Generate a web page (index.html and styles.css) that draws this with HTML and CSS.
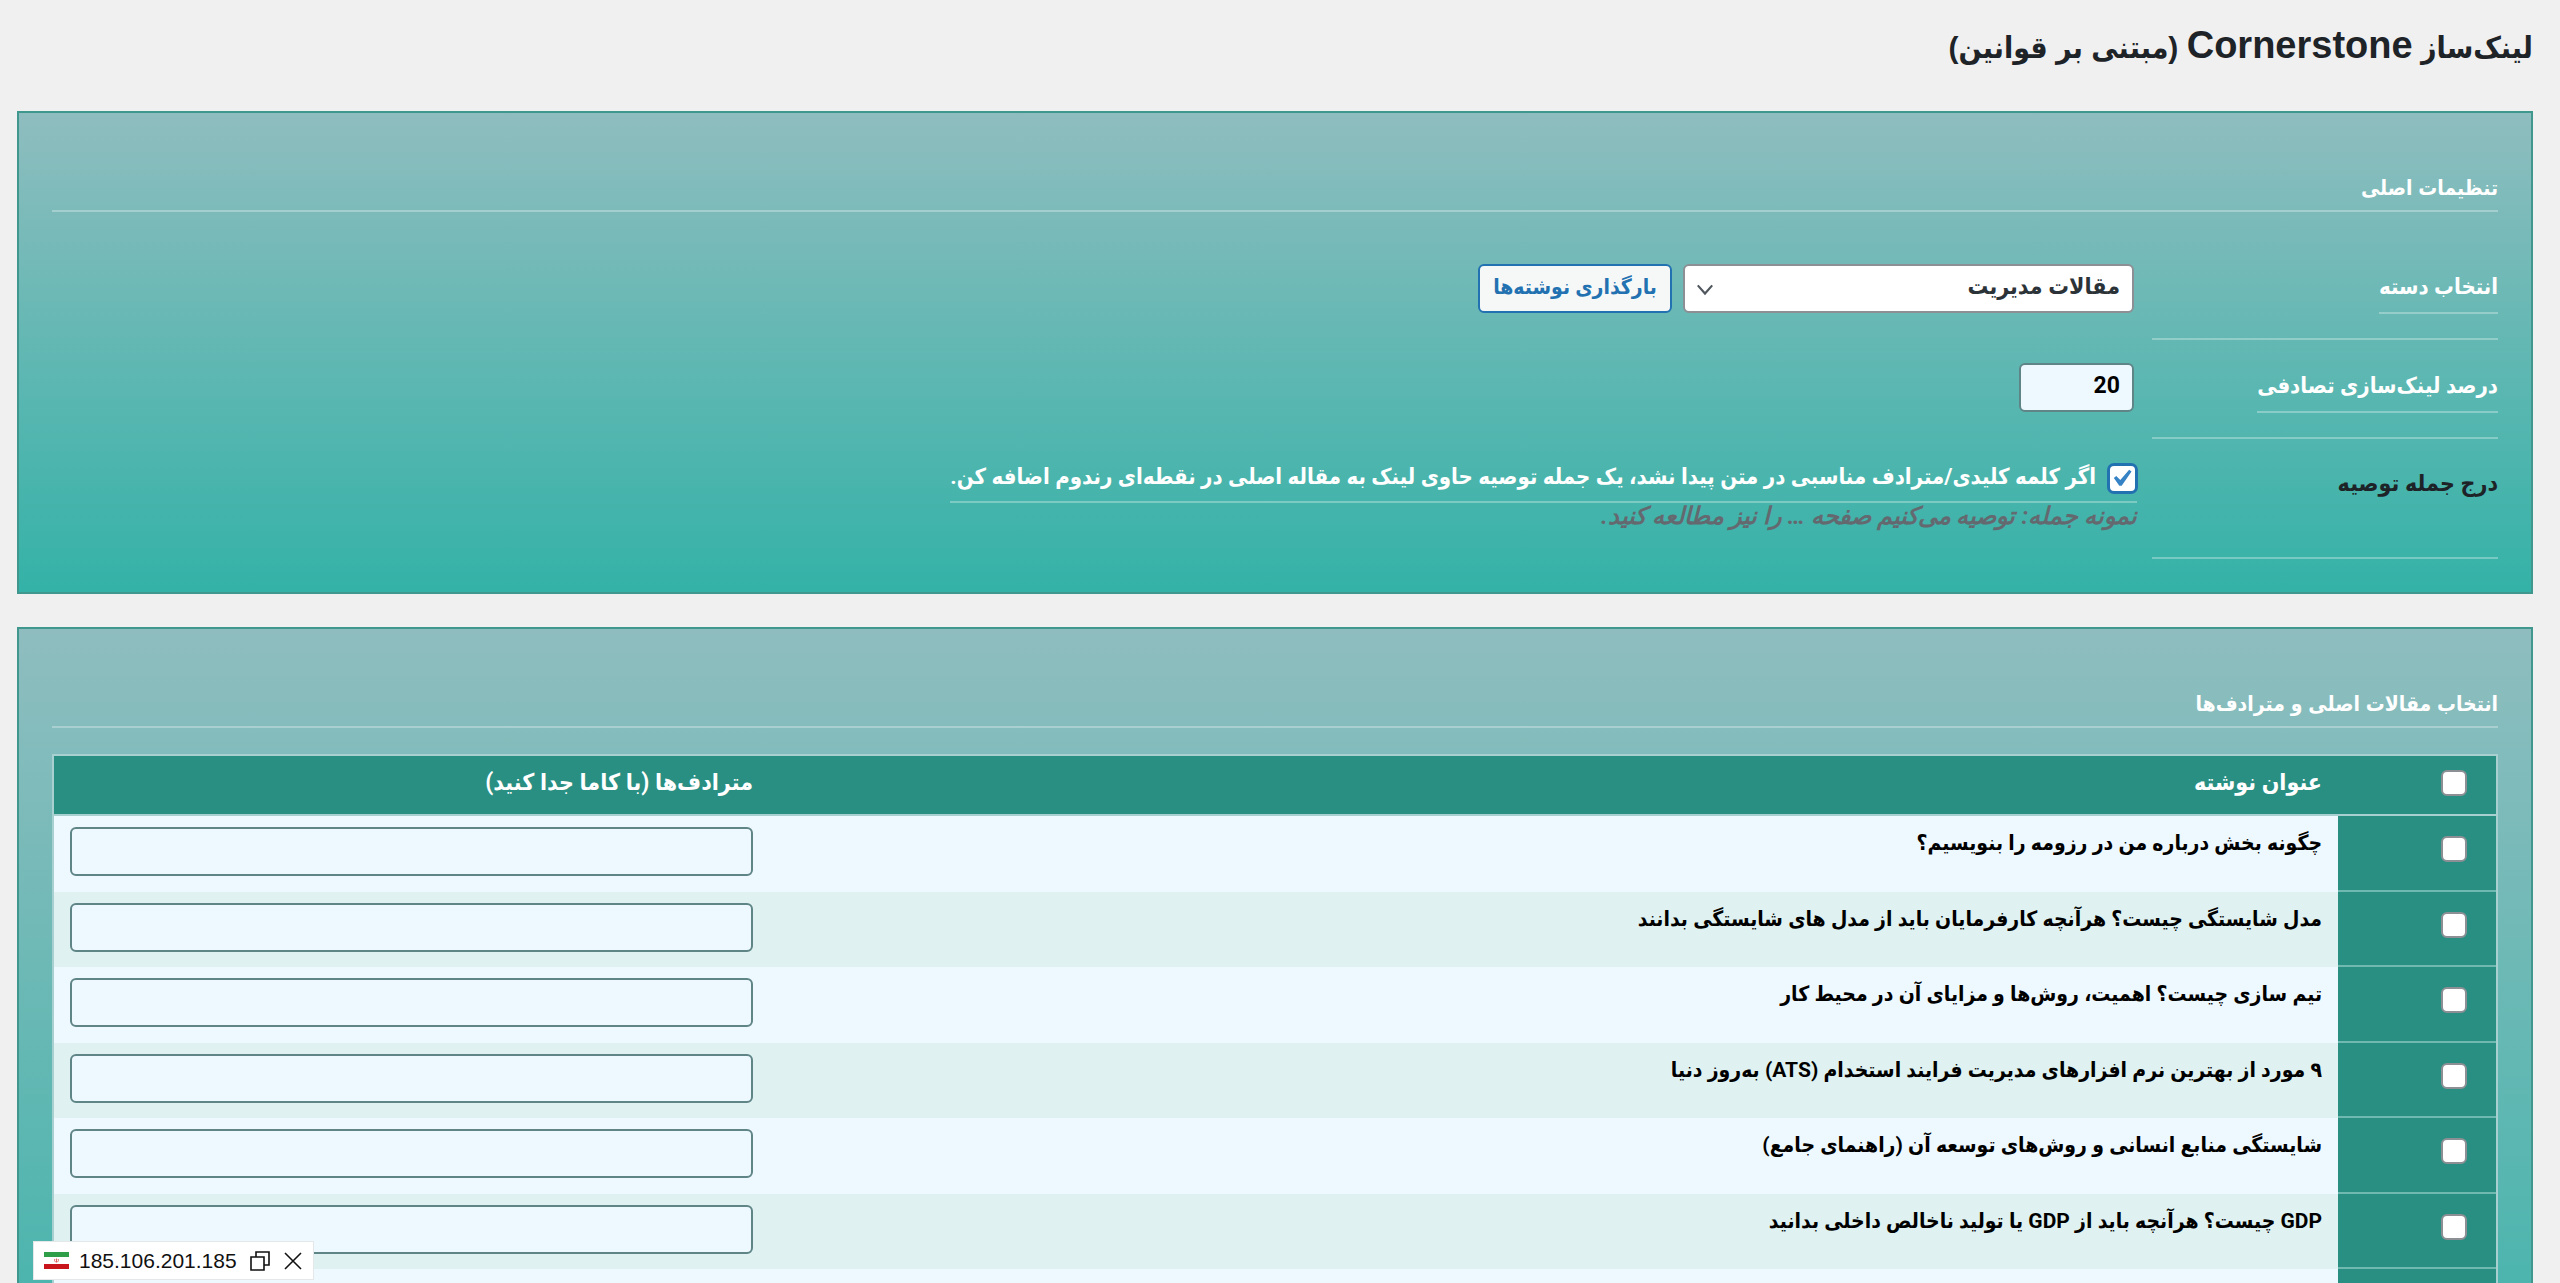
FILE: index.html
```html
<!DOCTYPE html>
<html lang="fa" dir="rtl">
<head>
<meta charset="utf-8">
<meta name="viewport" content="width=device-width, initial-scale=1">
<title>لینک‌ساز Cornerstone</title>
<link rel="stylesheet" href="styles.css">
</head>
<body>

<div class="wrap">
  <h1>لینک‌ساز <span class="latin">Cornerstone</span> (مبتنی بر قوانین)</h1>

  <form class="card">
    <h2>تنظیمات اصلی</h2>
    <div class="form-row">
      <div class="form-head"><label for="category">انتخاب دسته</label></div>
      <div class="form-field">
        <span class="select-box">
          <select id="category">
            <option>مقالات مدیریت</option>
          </select>
          <svg class="arrow" viewBox="0 0 20 20"><path d="M2 6l8 9 8-9" fill="none" stroke="#50575e" stroke-width="2.4"/></svg>
        </span>
        <button type="button" class="button">بارگذاری نوشته‌ها</button>
      </div>
    </div>
    <div class="form-row">
      <div class="form-head"><label for="percent">درصد لینک‌سازی تصادفی</label></div>
      <div class="form-field"><input type="text" class="small-text" id="percent" value="20"></div>
    </div>
    <div class="form-row last">
      <div class="form-head">درج جمله توصیه</div>
      <div class="form-field suggest">
        <label for="suggest"><input type="checkbox" class="check" id="suggest" checked>اگر کلمه کلیدی/مترادف مناسبی در متن پیدا نشد، یک جمله توصیه حاوی لینک به مقاله اصلی در نقطه‌ای رندوم اضافه کن.</label>
        <p class="description">نمونه جمله: توصیه می‌کنیم صفحه … را نیز مطالعه کنید.</p>
      </div>
    </div>
  </form>

  <div class="card posts">
    <h2>انتخاب مقالات اصلی و مترادف‌ها</h2>
    <table>
      <thead>
        <tr>
          <th class="col-check"><input type="checkbox" class="check" aria-label="انتخاب همه"></th>
          <th>عنوان نوشته</th>
          <th class="col-syn">مترادف‌ها (با کاما جدا کنید)</th>
        </tr>
      </thead>
      <tbody>
        <tr>
          <th class="col-check"><input type="checkbox" class="check" id="p1"></th>
          <td><label for="p1">چگونه بخش درباره من در رزومه را بنویسیم؟</label></td>
          <td><input type="text" class="synonyms" aria-label="مترادف‌ها"></td>
        </tr>
        <tr>
          <th class="col-check"><input type="checkbox" class="check" id="p2"></th>
          <td><label for="p2">مدل شایستگی چیست؟ هرآنچه کارفرمایان باید از مدل های شایستگی بدانند</label></td>
          <td><input type="text" class="synonyms" aria-label="مترادف‌ها"></td>
        </tr>
        <tr>
          <th class="col-check"><input type="checkbox" class="check" id="p3"></th>
          <td><label for="p3">تیم سازی چیست؟ اهمیت، روش‌ها و مزایای آن در محیط کار</label></td>
          <td><input type="text" class="synonyms" aria-label="مترادف‌ها"></td>
        </tr>
        <tr>
          <th class="col-check"><input type="checkbox" class="check" id="p4"></th>
          <td><label for="p4">۹ مورد از بهترین نرم افزارهای مدیریت فرایند استخدام (ATS) به‌روز دنیا</label></td>
          <td><input type="text" class="synonyms" aria-label="مترادف‌ها"></td>
        </tr>
        <tr>
          <th class="col-check"><input type="checkbox" class="check" id="p5"></th>
          <td><label for="p5">شایستگی منابع انسانی و روش‌های توسعه آن (راهنمای جامع)</label></td>
          <td><input type="text" class="synonyms" aria-label="مترادف‌ها"></td>
        </tr>
        <tr>
          <th class="col-check"><input type="checkbox" class="check" id="p6"></th>
          <td><label for="p6">GDP چیست؟ هرآنچه باید از GDP یا تولید ناخالص داخلی بدانید</label></td>
          <td><input type="text" class="synonyms" aria-label="مترادف‌ها"></td>
        </tr>
        <tr>
          <th class="col-check"></th>
          <td></td>
          <td></td>
        </tr>
      </tbody>
    </table>
  </div>
</div>

<div class="ip-badge" dir="ltr">
  <svg class="flag" viewBox="0 0 25 17">
    <rect width="25" height="17" fill="#fff"/>
    <rect width="25" height="5" fill="#2f9e48"/>
    <rect y="12" width="25" height="5" fill="#c8141b"/>
    <path d="M12.5 6.5v4M10.8 7q-.8 1.8.8 3.2M14.2 7q.8 1.8-.8 3.2" fill="none" stroke="#d9534f" stroke-width=".9"/>
  </svg>
  <span class="ip">185.106.201.185</span>
  <button type="button" aria-label="کپی"><svg viewBox="0 0 20 20"><path d="M6 6V1h13v13h-5M1 6h13v13H1z" fill="none" stroke="#111" stroke-width="1.6"/></svg></button>
  <button type="button" aria-label="بستن"><svg viewBox="0 0 20 20"><path d="M2 2l16 16M18 2L2 18" fill="none" stroke="#111" stroke-width="1.6"/></svg></button>
</div>

</body>
</html>
```
FILE: styles.css
```css
* {box-sizing: border-box}

body {
  margin: 0;
  height: 100vh;
  overflow: hidden;
  background: #f0f0f1;
  color: #1d2327;
  font-family: Roboto, "DejaVu Sans Condensed", "DejaVu Sans", sans-serif;
  font-size: 23px;
  font-weight: bold;
  line-height: 32px;
}

.wrap {
  padding: 15px 27px 0 17px;
}

h1 {
  margin: 0 0 33px;
  font-family: "Liberation Sans", "DejaVu Sans Condensed", sans-serif;
  font-size: 30px;
  line-height: 60px;
}

h1 .latin {
  font-size: 38px;
}

/* Cards */
.card {
  margin-bottom: 33px;
  padding: 56px 33px 33px;
  border: 2px solid #3f978e;
  background: linear-gradient(#8fbdbf, #34b2a7);
}

.card h2 {
  margin: 0;
  height: 43px;
  border-bottom: 2px solid rgba(255, 255, 255, 0.3);
  color: #fff;
  font-family: "Liberation Sans", "DejaVu Sans Condensed", sans-serif;
  font-size: 21px;
  line-height: 38px;
}

/* Settings form */
.form-row {
  display: flex;
  align-items: stretch;
}

.form-head {
  width: 346px;
  height: 99px;
  padding-top: 24px;
  border-bottom: 2px solid rgba(255, 255, 255, 0.3);
}

.form-row:nth-of-type(1) .form-head {
  height: 128px;
  padding-top: 53px;
}

.form-row.last .form-head {
  height: 120px;
  padding-top: 29px;
}

.form-head label,
.suggest label {
  display: inline-block;
  height: 49px;
  border-bottom: 2px solid rgba(255, 255, 255, 0.3);
  color: #fff;
  font-size: 22px;
  line-height: 44px;
}

.form-field {
  display: flex;
  align-items: flex-end;
  gap: 11px;
  padding: 0 18px 27px 0;
}

.form-field.suggest {
  display: block;
  padding: 22px 15px 0 0;
}

.suggest label {
  height: 42px;
  line-height: 32px;
}

.suggest .check {
  width: 29px;
  height: 29px;
  margin: 0 0 0 12px;
  border: 2px solid #2271b1;
  box-shadow: 0 0 0 1px #2271b1;
}

.description {
  margin: 0;
  color: #646970;
  font-size: 24px;
  font-style: italic;
  line-height: 26px;
}

input[type=text],
select,
.button {
  height: 49px;
  border: 2px solid #5f8587;
  border-radius: 6px;
  font-family: inherit;
  font-size: 23px;
  font-weight: bold;
}

input[type=text] {
  background: #eef8ff;
  color: #000;
}

.small-text {
  width: 115px;
  padding: 0 12px 4px;
}

.select-box {
  position: relative;
}

select {
  display: block;
  appearance: none;
  width: 451px;
  padding: 0 12px 4px;
  border-color: #8c8f94;
  background: #fff;
  color: #2c3338;
}

.arrow {
  position: absolute;
  left: 13px;
  top: 16px;
  width: 18px;
  height: 18px;
}

.button {
  width: 194px;
  padding: 0 0 4px;
  border-color: #2271b1;
  background: #f6f7f7;
  color: #2271b1;
  font-size: 21px;
}

/* Check boxes */
.check {
  appearance: none;
  width: 26px;
  height: 26px;
  margin: 0;
  border: 2px solid #8c8f94;
  border-radius: 6px;
  background: #fff;
  vertical-align: middle;
}

.check:checked::before {
  content: "";
  display: block;
  width: 34px;
  height: 34px;
  margin: -4px -3px 0 0;
  background: #3582c4;
  clip-path: polygon(74% 24%, 81% 29%, 52% 71%, 45% 71%, 29% 48%, 36% 42%, 48% 54%);
}

/* Posts table */
.posts {
  padding-bottom: 180px;
}

table {
  width: 100%;
  margin-top: 26px;
  border: 2px solid #a9d0d0;
  border-spacing: 0;
  table-layout: fixed;
}

th, td {
  padding: 11px 16px;
  text-align: right;
  vertical-align: top;
}

thead th {
  height: 60px;
  border-bottom: 2px solid #a9d0d0;
  background: #298f83;
  color: #fff;
}

tbody tr {
  height: 76px;
  background: #eef8ff;
  color: #000;
  font-size: 21px;
}

tbody tr:nth-child(even) {
  height: 75px;
  background: #dff2f1;
}

.col-check {
  width: 158px;
  padding-top: 14px;
  padding-right: 29px;
}

.col-check .check {
  display: block;
}

.col-syn {
  width: 715px;
}

tbody .col-check {
  padding-top: 20px;
  border-bottom: 2px solid #6fb9b1;
  background: #298f83;
}

.synonyms {
  display: block;
  width: 100%;
  padding: 0 12px;
}

/* IP badge */
.ip-badge {
  position: fixed;
  left: 33px;
  bottom: 3px;
  display: flex;
  align-items: center;
  height: 39px;
  padding: 0 10px;
  border: 1px solid #e4e8e8;
  background: #fff;
  color: #111;
  font-family: "Liberation Sans", sans-serif;
  font-size: 21px;
  font-weight: normal;
}

.ip-badge .flag {
  width: 25px;
  height: 17px;
  margin-right: 10px;
}

.ip-badge button {
  width: 20px;
  height: 20px;
  margin-left: 13px;
  padding: 0;
  border: 0;
  background: none;
}

.ip-badge button svg {
  display: block;
  width: 20px;
  height: 20px;
}
```
